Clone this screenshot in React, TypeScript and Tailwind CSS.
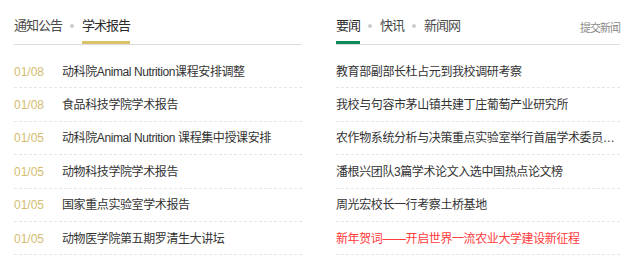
const font = "font-['Liberation_Sans','Noto_Sans_CJK_SC',sans-serif]"

const notices = [
  { date: "01/08", title: "动科院Animal Nutrition课程安排调整" },
  { date: "01/08", title: "食品科技学院学术报告" },
  { date: "01/05", title: "动科院Animal Nutrition 课程集中授课安排" },
  { date: "01/05", title: "动物科技学院学术报告" },
  { date: "01/05", title: "国家重点实验室学术报告" },
  { date: "01/05", title: "动物医学院第五期罗清生大讲坛" },
]

const news = [
  { title: "教育部副部长杜占元到我校调研考察" },
  { title: "我校与句容市茅山镇共建丁庄葡萄产业研究所" },
  { title: "农作物系统分析与决策重点实验室举行首届学术委员会会议" },
  { title: "潘根兴团队3篇学术论文入选中国热点论文榜" },
  { title: "周光宏校长一行考察土桥基地" },
  { title: "新年贺词——开启世界一流农业大学建设新征程", hot: true },
]

function Dot() {
  return (
    <div className="h-[18px] mb-[9px] mx-[8px] flex items-center">
      <span className="block w-[4px] h-[4px] rounded-full bg-[#cccccc]" />
    </div>
  )
}

function Tab({ label, active, bar }: { label: string; active?: boolean; bar: string }) {
  return (
    <div
      className={`pb-[6px] border-b-[3px] text-[13px] leading-[18px] tracking-[-1px] ${
        active ? `${bar} text-[#2a2a2a]` : "border-transparent text-[#4a4a4a]"
      }`}
    >
      {label}
    </div>
  )
}

export default function App() {
  return (
    <div className={`${font} w-[640px] h-[267px] bg-white flex overflow-hidden`}>
      {/* 通知公告 / 学术报告 */}
      <div className="ml-[14px] w-[288px]">
        <div className="h-[45px] flex items-end border-b border-[#dddddd]">
          <Tab label="通知公告" bar="border-[#d8c365]" />
          <Dot />
          <Tab label="学术报告" active bar="border-[#d8c365]" />
        </div>
        <ul className="pt-[10px]">
          {notices.map((n, i) => (
            <li
              key={i}
              className="h-[33.4px] flex items-center border-b border-dashed border-[#e6e6e6] text-[12px] pt-[1px]"
            >
              <span className="w-[48px] shrink-0 text-[#d4bd6f]">{n.date}</span>
              <span className="text-[#333333] tracking-[-0.4px] whitespace-nowrap">{n.title}</span>
            </li>
          ))}
        </ul>
      </div>

      {/* 要闻 / 快讯 / 新闻网 */}
      <div className="ml-[34px] w-[284px]">
        <div className="h-[45px] flex items-end border-b border-[#dddddd]">
          <Tab label="要闻" active bar="border-[#10895a]" />
          <Dot />
          <Tab label="快讯" bar="border-[#10895a]" />
          <Dot />
          <Tab label="新闻网" bar="border-[#10895a]" />
          <div className="ml-auto mb-[9px] text-[11px] leading-[14px] tracking-[-1px] text-[#888888]">
            提交新闻
          </div>
        </div>
        <ul className="pt-[10px]">
          {news.map((n, i) => (
            <li
              key={i}
              className="h-[33.4px] flex items-center border-b border-dashed border-[#e6e6e6] text-[12px] pt-[1px]"
            >
              <span
                className={`block overflow-hidden text-ellipsis whitespace-nowrap tracking-[-0.4px] ${
                  n.hot ? "text-[#ff3b3b]" : "text-[#333333]"
                }`}
              >
                {n.title}
              </span>
            </li>
          ))}
        </ul>
      </div>
    </div>
  )
}
